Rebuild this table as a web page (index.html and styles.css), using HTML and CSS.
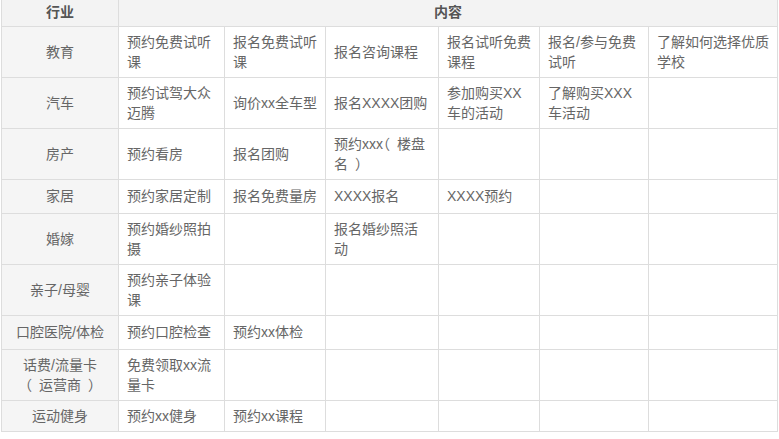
FILE: index.html
```html
<!DOCTYPE html>
<html lang="zh-CN">
<head>
<meta charset="utf-8">
<title>行业内容</title>
<link rel="stylesheet" href="styles.css">
</head>
<body>
<table class="industry-table">
  <colgroup>
    <col class="col-ind">
    <col class="col-a">
    <col class="col-b">
    <col class="col-c">
    <col class="col-d">
    <col class="col-e">
    <col class="col-f">
  </colgroup>
  <thead>
    <tr class="row-head"><th>行业</th><th colspan="6">内容</th></tr>
  </thead>
  <tbody>
    <tr class="row-tall"><th>教育</th><td>预约免费试听课</td><td>报名免费试听课</td><td>报名咨询课程</td><td>报名试听免费课程</td><td>报名/参与免费试听</td><td>了解如何选择优质学校</td></tr>
    <tr class="row-tall"><th>汽车</th><td>预约试驾大众迈腾</td><td>询价xx全车型</td><td>报名XXXX团购</td><td>参加购买XX车的活动</td><td>了解购买XXX车活动</td><td></td></tr>
    <tr class="row-tall"><th>房产</th><td>预约看房</td><td>报名团购</td><td>预约xxx<span class="paren-open">（</span>楼盘名<span class="paren-close">）</span></td><td></td><td></td><td></td></tr>
    <tr class="row-short"><th>家居</th><td>预约家居定制</td><td>报名免费量房</td><td>XXXX报名</td><td>XXXX预约</td><td></td><td></td></tr>
    <tr class="row-tall"><th>婚嫁</th><td>预约婚纱照拍摄</td><td></td><td>报名婚纱照活动</td><td></td><td></td><td></td></tr>
    <tr class="row-tall"><th>亲子/母婴</th><td>预约亲子体验课</td><td></td><td></td><td></td><td></td><td></td></tr>
    <tr class="row-short"><th>口腔医院/体检</th><td>预约口腔检查</td><td>预约xx体检</td><td></td><td></td><td></td><td></td></tr>
    <tr class="row-tall"><th>话费/流量卡<span class="paren-open">（</span>运营商<span class="paren-close">）</span></th><td>免费领取xx流量卡</td><td></td><td></td><td></td><td></td><td></td></tr>
    <tr class="row-last"><th>运动健身</th><td>预约xx健身</td><td>预约xx课程</td><td></td><td></td><td></td><td></td></tr>
  </tbody>
</table>
</body>
</html>
```

FILE: styles.css
```css
html, body {
  margin: 0;
  padding: 0;
  background: #ffffff;
}

body {
  font-family: "Liberation Sans", "Noto Sans CJK SC", sans-serif;
  font-size: 14px;
  color: #666666;
}

.industry-table {
  margin-left: 1px;
  width: 777px;
  table-layout: fixed;
  border-collapse: collapse;
  border-style: hidden solid solid solid;
  border-width: 1px;
  border-color: #dddddd;
}

.col-ind { width: 117px; }
.col-a { width: 106px; }
.col-b { width: 101px; }
.col-c { width: 113px; }
.col-d { width: 101px; }
.col-e { width: 109px; }
.col-f { width: 129px; }

.industry-table th,
.industry-table td {
  border: 1px solid #dddddd;
  padding: 5px 8px;
  line-height: 20px;
  vertical-align: middle;
  word-break: normal;
}

.industry-table td {
  text-align: left;
  background: #ffffff;
}

.industry-table tbody th {
  font-weight: normal;
  text-align: center;
  background: #f5f5f5;
  color: #666666;
}

.industry-table thead th {
  background: #f3f3f3;
  color: #555555;
  font-weight: bold;
  text-align: center;
  padding-top: 2px;
  padding-bottom: 3px;
}

.paren-open,
.paren-close {
  font-feature-settings: "halt" 1;
}

.paren-open { padding-right: 7px; }
.paren-close { padding-left: 7px; }

.row-head { height: 26px; }
.row-tall { height: 51px; }
.row-short { height: 34px; }
.row-last { height: 30px; }
```
